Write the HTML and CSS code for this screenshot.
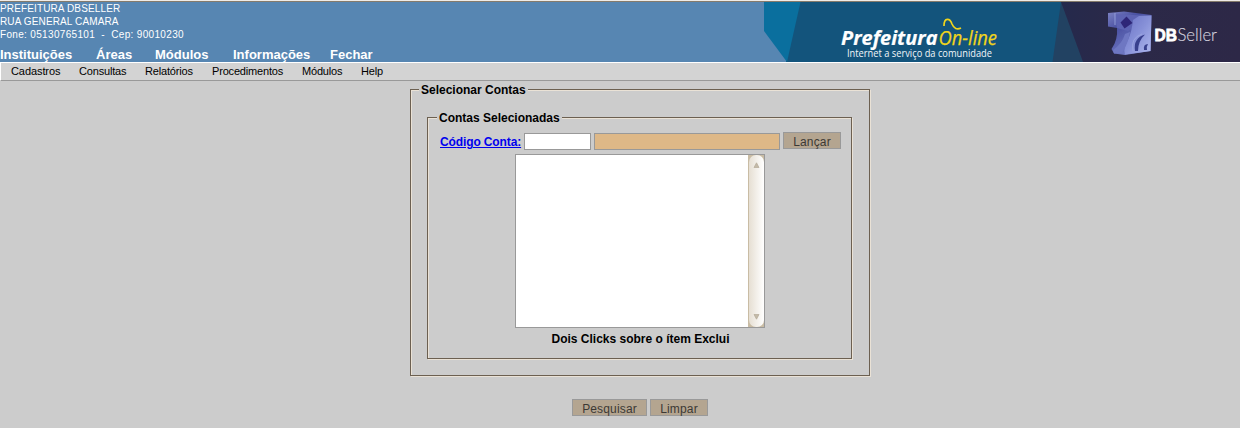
FILE: index.html
```html
<!DOCTYPE html>
<html lang="pt-BR">
<head>
<meta charset="utf-8">
<title>Prefeitura On-line</title>
<link rel="stylesheet" href="styles.css">
</head>
<body>
<header class="header">
  <div class="header-left">
    <div class="org">PREFEITURA DBSELLER<br>RUA GENERAL CAMARA<br><span class="phone">Fone: 05130765101 &nbsp;-&nbsp; Cep: 90010230</span></div>
    <nav class="modules"><a>Instituições</a><a>Áreas</a><a>Módulos</a><a>Informações</a><a>Fechar</a></nav>
  </div>
  <svg class="banner" width="476" height="60" viewBox="0 0 476 60">
    <defs>
      <linearGradient id="face" x1="0" y1="0" x2="1" y2="1"><stop offset="0" stop-color="#6a72c4"/><stop offset=".5" stop-color="#8791d8"/><stop offset="1" stop-color="#b0b9ee"/></linearGradient>
      <linearGradient id="body" x1="0" y1="0" x2=".7" y2="1"><stop offset="0" stop-color="#7d83c4"/><stop offset=".35" stop-color="#4a51a2"/><stop offset="1" stop-color="#7b84cc"/></linearGradient>
      <linearGradient id="night"><stop offset="0" stop-color="#25294c"/><stop offset=".35" stop-color="#2b2948"/><stop offset="1" stop-color="#2d2847"/></linearGradient>
      <filter id="soft"><feGaussianBlur stdDeviation=".5"/></filter>
    </defs>
    <path fill="#13547c" d="M22 0H300V60H22z"/>
    <path fill="#0a6f9e" d="M0 0H36.500L23 60L0 29z"/>
    <path fill="#224262" d="M297 0L288.500 60H330V0z"/>
    <path fill="url(#night)" d="M297 0H476V60H319z"/>
    <text class="brand" x="77" y="43" textLength="96.500" lengthAdjust="spacingAndGlyphs">Prefeitura</text>
    <text class="online" x="174.500" y="43" textLength="58.500" lengthAdjust="spacingAndGlyphs">On-line</text>
    <path fill="none" stroke="#f1d51b" stroke-width="1.700" d="M180 24C180 15 186 16 188 22Q191 29 197 26"/>
    <text class="slogan" x="83" y="54.500" textLength="145" lengthAdjust="spacingAndGlyphs">Internet a serviço da comunidade</text>
    <g filter="url(#soft)">
      <path fill="url(#body)" d="M344 11L360 9.500L387.500 13L386.500 49L361 53L350 51.500L347.500 47Q354 38 353 26L344 24.500z"/>
      <path fill="#5d64b3" d="M351 12L387 14L364 29L353 26z"/>
      <path fill="url(#face)" d="M387.500 13.500L386.500 49L361 52.500Q359 46 364 38Q368 29 369 18L375 14z"/>
      <path fill="#6e77c2" d="M349 48Q358 42 361 32L366 30Q364 42 358 51L350 51.500z"/>
      <path fill="#2f2778" d="M362.500 14.500L368.500 21L360.500 26.500L356.500 20.500z"/>
      <path fill="#39408d" d="M371 49Q369 36 381 32.500Q374 39 374 49zM380 48Q379 42 384 42Q382 45 383 48z"/>
      <path fill="none" stroke="#9fa9e2" stroke-width=".8" d="M351 11L351 23M369 49Q366 36 378 32"/>
    </g>
    <text class="db" x="390.500" y="39" textLength="22.500" lengthAdjust="spacingAndGlyphs">DB</text>
    <text class="seller" x="413.500" y="39" textLength="39.500" lengthAdjust="spacingAndGlyphs">Seller</text>
  </svg>
</header>
<nav class="menu"><a>Cadastros</a><a>Consultas</a><a>Relatórios</a><a>Procedimentos</a><a>Módulos</a><a>Help</a></nav>
<main class="content">
  <fieldset class="outer">
    <legend>Selecionar Contas</legend>
    <fieldset class="inner">
      <legend>Contas Selecionadas</legend>
      <div class="row">
        <a class="lookup" href="#">Código Conta:</a>
        <input class="field code" type="text">
        <input class="field description" type="text" readonly>
        <button class="btn launch">Lançar</button>
      </div>
      <div class="list">
        <div class="scrollbar">
          <svg width="7" height="6" viewBox="0 0 7 6"><path fill="#c4baa8" stroke="#b5aa98" stroke-width=".7" d="M3.500 .8L6 5.500H1z"/></svg>
          <svg width="7" height="6" viewBox="0 0 7 6"><path fill="#c4baa8" stroke="#b5aa98" stroke-width=".7" d="M1 .5H6L3.500 5.200z"/></svg>
        </div>
      </div>
      <div class="hint">Dois Clicks sobre o ítem Exclui</div>
    </fieldset>
  </fieldset>
  <div class="actions"><button class="btn search">Pesquisar</button><button class="btn clear">Limpar</button></div>
</main>
</body>
</html>
```
FILE: styles.css
```css
* { box-sizing: border-box; }
body { margin: 0; background: #ccc; color: #000; font: 12px/14px "Liberation Sans", Arial, sans-serif; overflow: hidden; }
.header { display: flex; justify-content: space-between; height: 62px; background: #5786b2; border-top: 1px solid #efebe7; box-shadow: inset 0 1px #857b6c; padding-top: 1px; }
.org { color: #fff; font-size: 10px; line-height: 13px; letter-spacing: .13px; }
.phone { letter-spacing: .33px; }
.modules { display: flex; margin-top: 6px; color: #fff; font-size: 13px; font-weight: bold; line-height: 15px; }
.modules a:nth-child(1) { width: 96px; }
.modules a:nth-child(2) { width: 59px; }
.modules a:nth-child(3) { width: 78px; }
.modules a:nth-child(4) { width: 97px; }
.banner { display: block; }
.brand { font: italic bold 19px "Open Sans", sans-serif; fill: #fff; stroke: #fff; stroke-width: .2; }
.online { font: italic 20.5px "Open Sans", sans-serif; fill: #f1d51b; stroke: #f1d51b; stroke-width: .25; }
.slogan { font: 10px "Open Sans", sans-serif; fill: #f2f6f9; }
.db { font: bold 17px "Liberation Sans", sans-serif; fill: #fff; stroke: #fff; stroke-width: .8; }
.seller { font: 300 18px Lato, sans-serif; fill: #d5d2df; stroke: #d5d2df; stroke-width: .15; }
.menu { display: flex; height: 19px; padding: 2px 10px 0; background: #d3d3d3; border-top: 1px solid #fff; border-left: 1px solid #fff; border-bottom: 1px solid #999; font-size: 11px; line-height: 13px; letter-spacing: -.18px; }
.menu a:nth-child(1) { width: 68px; letter-spacing: -.08px; }
.menu a:nth-child(2) { width: 66px; }
.menu a:nth-child(3) { width: 67px; }
.menu a:nth-child(4) { width: 90px; }
.menu a:nth-child(5) { width: 59px; }
.content { display: flex; flex-direction: column; width: 461px; margin-left: 410px; padding-top: 2px; }
fieldset { margin: 0; min-width: 0; border: 1px solid #6c6051; box-shadow: 1px 1px #eae2d6, inset 1px 1px #eae2d6; }
legend { height: 13px; padding: 0 2px; background: #ccc; font-weight: bold; }
.outer { width: 460px; height: 293px; padding: 15px 15px 0 8px; }
.inner { width: 425px; height: 248px; margin-left: 8px; padding: 8px 9px 0 9px; }
.row { display: flex; align-items: flex-start; height: 22px; padding-left: 3px; }
.lookup { flex: none; width: 81px; margin: 3px 3px 0 0; color: #00e; font-weight: bold; letter-spacing: -.12px; white-space: nowrap; }
.field { flex: none; height: 17px; margin: 1px 3px 0 0; border: 1px solid #999; padding: 0 2px; background: #fff; }
.code { width: 67px; }
.description { width: 186px; background: #deb887; }
.btn { flex: none; height: 17px; border: 1px solid #999; border-radius: 0; padding: 2px 0 0; background: #b4a590; color: #3c3935; font: 12px/14px "Liberation Sans", Arial, sans-serif; letter-spacing: .15px; text-align: center; }
.launch { width: 58px; }
.list { display: flex; justify-content: flex-end; width: 250px; height: 174px; margin-left: 78px; border: 1px solid #999; background: #fff; }
.scrollbar { position: relative; z-index: 0; display: flex; flex-direction: column; align-items: center; justify-content: space-between; width: 16px; padding: 7px 0; border-left: 1px solid #c9bca4; background: #c9bca4; }
.scrollbar::before { content: ""; position: absolute; inset: 0; z-index: -1; border-radius: 7px; background: linear-gradient(90deg, #e6dfd3, #fff); }
.hint { margin-top: 4px; padding-left: 2px; text-align: center; font-weight: bold; }
.actions { display: flex; gap: 3px; margin: 23px 0 0 162px; }
.search { width: 75px; }
.clear { width: 58px; }
```
